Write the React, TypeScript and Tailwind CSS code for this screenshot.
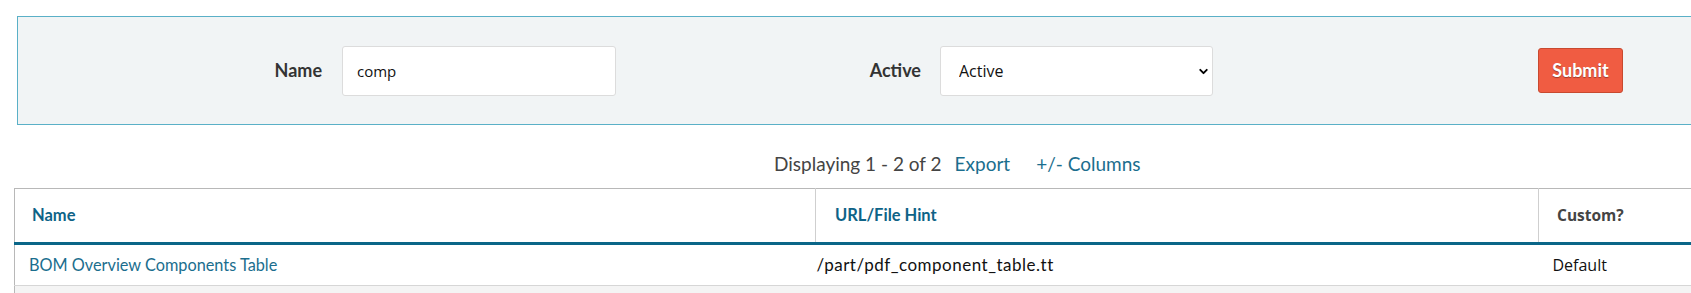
import { ChevronDown } from "lucide-react";

const sans = "font-['Lato','Open_Sans',sans-serif]";
const sys = "font-['Open_Sans','Noto_Sans',sans-serif]";

function FilterPanel() {
  return (
    <div className="ml-[17px] mt-[16px] flex h-[109px] w-[1700px] items-center border border-r-0 border-[#5ab0c7] bg-[#f1f4f5]">
      <div className={`w-[304px] text-right text-[18px] font-bold text-[#333] ${sans}`}>Name</div>
      <input
        defaultValue="comp"
        className={`ml-[20px] h-[50px] w-[274px] rounded-[3px] border border-[#dcdcdc] bg-white px-[14px] text-[15px] text-[#111] outline-none ${sys}`}
      />
      <div className={`w-[305px] text-right text-[18px] font-bold text-[#333] ${sans}`}>Active</div>
      <div className="relative ml-[19px] w-[273px]">
        <select
          defaultValue="Active"
          className={`h-[50px] w-full appearance-none rounded-[3px] border border-[#dcdcdc] bg-white px-[18px] text-[16px] text-[#111] outline-none ${sys}`}
        >
          <option>Active</option>
          <option>Inactive</option>
          <option>All</option>
        </select>
        <ChevronDown className="pointer-events-none absolute right-[3px] top-[19px] h-[13px] w-[13px] text-black" strokeWidth={3.5} />
      </div>
      <button
        className={`ml-[325px] h-[45px] w-[85px] rounded-[3px] border border-[#c8492f] bg-[#f05c42] text-[18px] font-bold text-white [text-shadow:0_1px_1px_rgba(0,0,0,0.35)] ${sans}`}
      >
        Submit
      </button>
    </div>
  );
}

function Pager() {
  return (
    <div className={`mt-[27px] flex h-[24px] items-center pl-[774px] text-[19px] ${sans}`}>
      <span className="text-[#444]">Displaying 1 - 2 of 2</span>
      <a className="ml-[13px] text-[#1b6e8e]">Export</a>
      <a className="ml-[26px] text-[#1b6e8e]">+/- Columns</a>
    </div>
  );
}

function ResultsTable() {
  return (
    <table className="ml-[14px] mt-[12px] w-[1700px] border-collapse border-l border-t border-[#b8b8b8]">
      <thead>
        <tr className="h-[55px] border-b-[3px] border-[#0a6688]">
          <th className={`w-[801px] border-r border-[#cfcfcf] pl-[17px] text-left text-[16.5px] font-bold text-[#0e6387] ${sans}`}>Name</th>
          <th className={`w-[723px] border-r border-[#cfcfcf] pl-[19px] text-left text-[16.5px] font-bold text-[#0e6387] ${sans}`}>URL/File Hint</th>
          <th className={`pl-[18px] text-left text-[15.5px] font-bold text-[#444] ${sys}`}>Custom?</th>
        </tr>
      </thead>
      <tbody>
        <tr className="h-[42px] border-b border-[#d6d6d6] bg-white">
          <td className={`pl-[14px] text-[16.3px] text-[#1b6e8e] ${sans}`}>
            <a>BOM Overview Components Table</a>
          </td>
          <td className={`pl-[1px] text-[17px] tracking-[0.5px] text-[#111] ${sans}`}>/part/pdf_component_table.tt</td>
          <td className={`pl-[14px] text-[16px] text-[#111] ${sys}`}>Default</td>
        </tr>
        <tr className="h-[41px] bg-[#f4f4f4]">
          <td />
          <td />
          <td />
        </tr>
      </tbody>
    </table>
  );
}

export default function App() {
  return (
    <div className="h-[293px] w-full overflow-hidden bg-white">
      <FilterPanel />
      <Pager />
      <ResultsTable />
    </div>
  );
}
